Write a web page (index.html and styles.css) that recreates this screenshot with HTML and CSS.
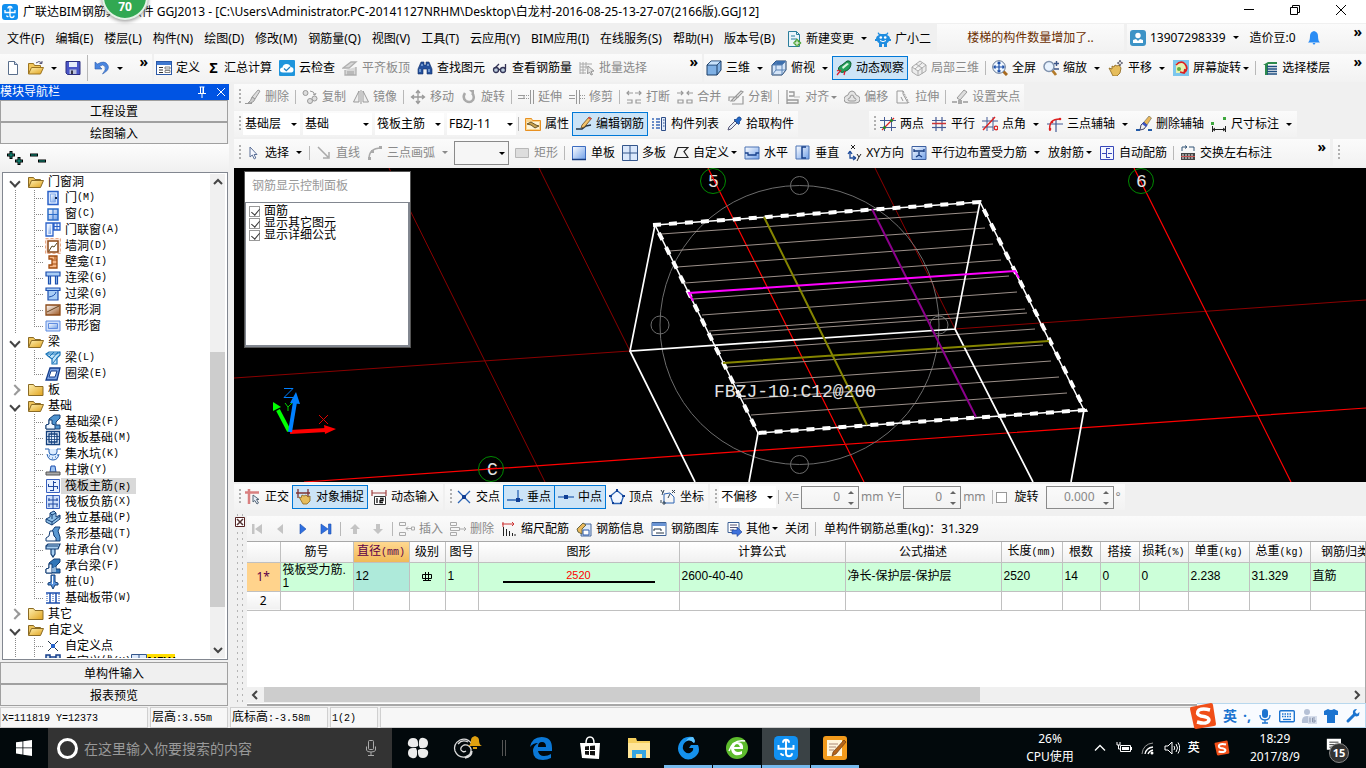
FILE: index.html
```html
<!DOCTYPE html>
<html lang="zh-CN">
<head>
<meta charset="utf-8">
<title>广联达BIM钢筋算量软件 GGJ2013</title>
<link rel="stylesheet" href="styles.css">
</head>
<body>
<svg class="sprite" aria-hidden="true">
<defs>
<linearGradient id="gy" x2="1" y2="1"><stop offset="0" stop-color="#fff0b0"/><stop offset="1" stop-color="#e0a21c"/></linearGradient>
<linearGradient id="gb" x2="1" y2="1"><stop offset="0" stop-color="#fff"/><stop offset="1" stop-color="#6f9fe8"/></linearGradient>
<linearGradient id="gr" x2="1" y2="1"><stop offset="0" stop-color="#fff"/><stop offset="1" stop-color="#9c5520"/></linearGradient>
</defs>
<symbol id="app" viewBox="0 0 16 16"><rect width="16" height="16" rx="3" fill="#1190f0"/><path d="M6 4.500q0-2 2-2t2 2M8 2.500v9q0 2 2 2t2-2M3 6v2.500h10V6M4.500 11.500q.5 1.500 2 1" fill="none" stroke="#fff" stroke-width="1.300"/></symbol>
<symbol id="newdoc" viewBox="0 0 16 16"><path d="M3.500 1.500h6l3 3v10h-9z" fill="#fff" stroke="#5a6f8c"/><path d="M9.500 1.500v3h3" fill="#cfdcf0" stroke="#5a6f8c"/></symbol>
<symbol id="openf" viewBox="0 0 16 16"><path d="M.5 14V3.500h5l1 2h6V8" fill="#f2c65a" stroke="#9c7420"/><path d="M.5 14l3-6.500h12l-3 6.500z" fill="url(#gy)" stroke="#9c7420"/><path d="M8 3q3-3 6 0m0-2v2.500h-2.500" fill="none" stroke="#557"/></symbol>
<symbol id="save" viewBox="0 0 16 16"><path d="M1 1.500h14v13H2.500L1 13z" fill="#4a56c8" stroke="#2c2f80"/><path d="M4 2h8v5H4z" fill="#e6ecfa"/><path d="M4.500 9.500h7V14h-7z" fill="#b9c0dc"/><path d="M6 10.500h2V14H6z" fill="#334"/></symbol>
<symbol id="undo" viewBox="0 0 16 16"><path d="M1 2v7h7L5.500 6.500Q9 3.500 11 6.500q1.500 3-2.500 7.500Q16 10 14 5.500 11-.500 3.500 4z" fill="#4a86e0" stroke="#2a5cae" stroke-width=".6"/></symbol>
<symbol id="define" viewBox="0 0 16 16"><rect x=".5" y="1.500" width="15" height="13" fill="#fff" stroke="#2b59a8"/><path d="M1 2h14v3H1z" fill="#3e78d0"/><path d="M3 7.500h4M3 10h4M3 12.500h4" stroke="#333"/><path d="M9 7h5v2H9zM9 10.500h5v2H9z" fill="none" stroke="#666" stroke-width=".8"/></symbol>
<symbol id="cloud" viewBox="0 0 16 16"><rect width="16" height="16" rx="1" fill="#1f95dc"/><path d="M4 12.500q-3 0-3-2.500t2.500-2.500Q4 4 7.500 4t4 3q3 0 3 2.800T12 12.500z" fill="#fff"/><path d="M5 8.500l2.300 2.200L11 7" fill="none" stroke="#1f7fc0" stroke-width="1.300"/></symbol>
<symbol id="flat" viewBox="0 0 16 16"><path d="M1 8l8-6 5 0-7 6zM3 10v5h11V7M5 12h7M5 14h7" fill="#d8d8d8" stroke="#b0b0b0" stroke-width="1.300"/></symbol>
<symbol id="bino" viewBox="0 0 16 16"><path d="M4 2h3v3h2V2h3l3 7v5h-5V9H6v5H1V9z" fill="#24509c" stroke="#102f68" stroke-width=".6"/><path d="M3 9v3m9-3v3M5 4v2m6-2v2" stroke="#9cc3f0" stroke-width="1.200"/></symbol>
<symbol id="glasses" viewBox="0 0 16 16"><circle cx="4" cy="10" r="2.500" fill="#bcd" stroke="#335" stroke-width="1.300"/><circle cx="11" cy="10" r="2.500" fill="#bcd" stroke="#335" stroke-width="1.300"/><path d="M6.500 9.500h2M3 8l4-4M13.500 9V4" stroke="#335" stroke-width="1.300"/></symbol>
<symbol id="batch" viewBox="0 0 16 16"><path d="M1 2v12M4 2v12M7 2v7M1 4h12M1 7h8M1 10h6M1 13h6" stroke="#aaa" fill="none"/><path d="M9 6l6 5-3 .5 1.500 3-1.500.5-1.500-3L8.500 14z" fill="#e2e2e2" stroke="#999"/></symbol>
<symbol id="cube" viewBox="0 0 16 16"><path d="M1 5l4-4h10v9l-4 5H1z" fill="#7fb0e4" stroke="#1b3c66"/><path d="M1 5h10v10M11 5l4-4" fill="none" stroke="#1b3c66"/><path d="M2 4.500L5 1.500h9l-3 3z" fill="#c9e2fa"/></symbol>
<symbol id="cubetop" viewBox="0 0 16 16"><path d="M1 5l4-4h10v9l-4 5H1z" fill="#d5e5f8" stroke="#1b3c66"/><path d="M1 5l4-4h10l-4 4z" fill="#3c6fae"/><path d="M1 5h10v10M11 5l4-4M1 15l4-5h10M5 10V2" fill="none" stroke="#5a83b5"/></symbol>
<symbol id="orbit" viewBox="0 0 16 16"><path d="M3 11Q1 7 6 5l5-4q3-1 4 2 0 6-5 8-4 3-7 0z" fill="#23a05a" stroke="#0b5c32"/><path d="M6 7l5-4 2 1-6 5z" fill="#d9f6e0"/><path d="M1 15l4-5M3 10l-2 1M8 15l1-4" stroke="#d23" fill="none" stroke-width="1.300"/></symbol>
<symbol id="local3d" viewBox="0 0 16 16"><path d="M1 7l8-6 6 4v6l-8 5-6-4zM1 7l6 4 8-6M7 11v5M5 4l6 4v6M4 9l7-6" fill="#ececec" stroke="#aaa"/></symbol>
<symbol id="full" viewBox="0 0 16 16"><path d="M11 11l4 4" stroke="#a86a20" stroke-width="3"/><circle cx="7" cy="7" r="6.300" fill="#eef6ff" stroke="#5f7390"/><path d="M7 2v10M2 7h10M5.500 3.500L7 2l1.500 1.500M5.500 10.500L7 12l1.500-1.500M3.500 5.500L2 7l1.500 1.500M10.500 5.500L12 7l-1.500 1.500" stroke="#1c4fa8" fill="none" stroke-width="1.200"/></symbol>
<symbol id="zoomi" viewBox="0 0 16 16"><path d="M9 10l4 5" stroke="#b37a28" stroke-width="2.800"/><circle cx="6" cy="6.500" r="5" fill="#e8f3ff" stroke="#8093ae" stroke-width="1.500"/><path d="M11 3.500h5M13.500 1v5M11 9h5" stroke="#3c5688" stroke-width="1.400"/></symbol>
<symbol id="pan" viewBox="0 0 16 16"><path d="M1 8l3 1V6l2 1 1-2 2 1 2-1 2 3-1 5-3 3H5z" fill="#e6bd5c" stroke="#8a651c" stroke-width=".8"/><path d="M12 0v6M9 3h6" stroke="#445" stroke-width="1.200"/><circle cx="12" cy="3" r="1.500" fill="#fff" stroke="#445" stroke-width=".7"/></symbol>
<symbol id="scrrot" viewBox="0 0 16 16"><rect width="16" height="16" fill="#7cc6ee"/><rect x="3" y="3" width="10" height="10" fill="#e6f2b0"/><path d="M3 5q5-5 9-1 4 5-1 9m1-4l-1 4-4-1" fill="none" stroke="#dc2020" stroke-width="1.700"/><circle cx="6" cy="9" r="2" fill="#62ad3f"/></symbol>
<symbol id="floors" viewBox="0 0 16 16"><path d="M1 5l5-3h9v2H6v11H3V5z" fill="#2d8a4d"/><path d="M5 6.500h10M5 9h10M5 11.500h10M5 14h10" stroke="#1c4d80" stroke-width="1.300"/></symbol>
<symbol id="brush" viewBox="0 0 16 16"><path d="M7 8l6-7 2 1-5 8z" fill="#ddd" stroke="#999"/><path d="M7 8l3 2q-1 4-7 4 3-2 4-6M0 14.500h7" fill="#ccc" stroke="#999"/></symbol>
<symbol id="copy" viewBox="0 0 16 16"><g fill="#ddd" stroke="#999"><circle cx="3.500" cy="4" r="2.500"/><circle cx="8" cy="12" r="2.500"/><circle cx="12.500" cy="9.500" r="2.500"/><path d="M8 2q4 0 5 4m-2-1l2 1 1-2" fill="none"/></g></symbol>
<symbol id="mirror" viewBox="0 0 16 16"><path d="M6 2v11H.500zM10 2v11h5.500zM8 1v14" fill="#eee" stroke="#999"/></symbol>
<symbol id="move" viewBox="0 0 16 16"><path d="M8 2v12M2 8h12M6 4l2-2.500L10 4M6 12l2 2.500 2-2.500M4 6L1.500 8 4 10M12 6l2.500 2-2.500 2" fill="none" stroke="#999" stroke-width="1.300"/></symbol>
<symbol id="rot" viewBox="0 0 16 16"><path d="M4 4q-3 5 1 8 4 2.500 7-1 2-4-1-7" fill="none" stroke="#aaa" stroke-width="2.500"/><path d="M8 1h5v5z" fill="#aaa"/></symbol>
<symbol id="extend" viewBox="0 0 16 16"><path d="M0 6.500h6v3H0" stroke="#999" fill="none"/><path d="M6 6.500h5M6 9.500h5" stroke="#999" stroke-dasharray="1 1"/><path d="M12.500 1v14M15.500 1v14" stroke="#999"/></symbol>
<symbol id="trim" viewBox="0 0 16 16"><path d="M0 6.500h6M0 9.500h6M7.500 1v14M10.500 1v14" stroke="#999"/><path d="M11 6.500h5M11 9.500h5" stroke="#999" stroke-dasharray="1 1"/></symbol>
<symbol id="breaki" viewBox="0 0 16 16"><path d="M1 11h5v3H1M15 11h-5v3h5M1 4h6M9 4h6M3 2L1 4l2 2M13 2l2 2-2 2" fill="none" stroke="#999" stroke-width="1.200"/></symbol>
<symbol id="merge" viewBox="0 0 16 16"><path d="M1 11h5v3H1zM10 11h5v3h-5zM0 4h6M10 4h6M4 2l2 2-2 2M12 2l-2 2 2 2" fill="none" stroke="#999" stroke-width="1.200"/></symbol>
<symbol id="split" viewBox="0 0 16 16"><path d="M1 12V8h10M4 15h11V7M3 12l10-10 2 1-9 9z" fill="none" stroke="#999" stroke-width="1.200"/></symbol>
<symbol id="align" viewBox="0 0 16 16"><path d="M2 1v14M4 3h5v4H4M2 11h11v3H2" fill="none" stroke="#999" stroke-width="1.300"/><path d="M9 8h6" stroke="#bbb"/></symbol>
<symbol id="offset" viewBox="0 0 16 16"><path d="M8 2q3 0 4 4 4 1 4 4 0 4-4 4H4q-4 0-4-4 0-3 4-4 1-4 4-4zM8 6q2 0 2 3 2 0 2 1.500T10 12H6q-2 0-2-1.500T6 9q0-3 2-3z" fill="#e4e4e4" stroke="#999"/></symbol>
<symbol id="stretch" viewBox="0 0 16 16"><path d="M2 2h6v3l5 9H2z" fill="none" stroke="#999"/><path d="M8 2l6 12" stroke="#999" stroke-dasharray="2 1"/><path d="M6 8l2 4" stroke="#999"/></symbol>
<symbol id="grippt" viewBox="0 0 16 16"><path d="M5 9l7-8 3 2-7 8z" fill="#ddd" stroke="#999"/><path d="M0 13h5M11 13h5" stroke="#999" stroke-width="1.500"/><path d="M6 11h4v4H6z" fill="#aaa"/></symbol>
<symbol id="prop" viewBox="0 0 16 16"><path d="M.5 2.500h6l1 2h8v10H.5z" fill="#fbd48c" stroke="#e89020"/><path d="M2 6h12v7H2z" fill="#fff4d8"/><path d="M2 8l4-2 5 3 3 1-4 2-4-3z" fill="#c8a24e" stroke="#4a3a14" stroke-width=".8"/></symbol>
<symbol id="editbar" viewBox="0 0 16 16"><path d="M0 13h6l4-3 5-1" fill="none" stroke="#234" stroke-width="1.400"/><path d="M6 9l7-8 2.500 1.500L8.500 11 5 12z" fill="#f3c36a" stroke="#6b4a1a" stroke-width=".8"/><path d="M13 1l2.500 1.500-1 1.200L12 2.200z" fill="#d44"/></symbol>
<symbol id="list" viewBox="0 0 16 16"><path d="M1 3h2M1 6h2M1 9h2M1 12h2M5 3h4M5 6h4M5 9h4M5 12h4" stroke="#3b69b8" stroke-width="1.300"/><path d="M10.500 1.500h4v13h-4z" fill="#e2ecfa" stroke="#2d4d88"/><path d="M12 4h1.500M12 7h1.500M12 10h1.500" stroke="#2d4d88"/></symbol>
<symbol id="pick" viewBox="0 0 16 16"><path d="M2 14l1-3 6-6 2 2-6 6z" fill="#e4eef8" stroke="#557"/><path d="M8 4l1-1 1 1q2-4 4-3 3 2-1 5l1 1-1.500 1.500z" fill="#2368c8" stroke="#123d80" stroke-width=".7"/></symbol>
<symbol id="ax2" viewBox="0 0 16 16"><path d="M4.500 1v14M11.500 1v14M0 4.500h16M0 11.500h16" stroke="#445a94"/><path d="M2 14L14 2" stroke="#d22" stroke-width="1.200"/><circle cx="4.500" cy="11.500" r="1.500" fill="#282"/><circle cx="11.500" cy="4.500" r="1.500" fill="#282"/></symbol>
<symbol id="axp" viewBox="0 0 16 16"><path d="M5 1v14M11 1v14M1 4.500h14" stroke="#445a94" stroke-width="1.200"/><path d="M1 7.500h14" stroke="#c33" stroke-width="1.500"/><path d="M1 11.500h14" stroke="#445a94" stroke-width="1.200"/></symbol>
<symbol id="axa" viewBox="0 0 16 16"><path d="M5 1v14M11 1v14M0 5h16M0 11h11" stroke="#445a94"/><path d="M1 14L13 1" stroke="#d22" stroke-width="1.400"/><circle cx="14" cy="12" r="1.800" fill="none" stroke="#d22" stroke-width="1.300"/></symbol>
<symbol id="ax3" viewBox="0 0 16 16"><path d="M0 8h16M9 3v13" stroke="#445a94" stroke-width="1.200"/><path d="M3 15Q1 3 13 3" fill="none" stroke="#d22" stroke-width="1.400"/><circle cx="3" cy="13" r="1.300" fill="#d22"/><circle cx="5" cy="6" r="1.300" fill="#d22"/><circle cx="13" cy="3" r="1.300" fill="#d22"/></symbol>
<symbol id="axdel" viewBox="0 0 16 16"><path d="M0 14h4M12 14h4" stroke="#235ba8" stroke-width="1.800"/><path d="M5 9l3-3 3 3-3 4-4 1z" fill="#eee" stroke="#446"/><path d="M8 6l5-6 2.500 2L11 9z" fill="#e9b75a" stroke="#665" stroke-width=".6"/><path d="M6 8l4 3 1.500-2-4-3z" fill="#3c52c0"/></symbol>
<symbol id="dim" viewBox="0 0 16 16"><path d="M1.500 10v6M14.500 10v6M2 13.500h12M4 12l-2 1.500 2 1.500M12 12l2 1.500-2 1.500" fill="none" stroke="#222"/><path d="M0 6h3v3H0zM12 1h3v3h-3z" fill="#3da63d"/></symbol>
<symbol id="cursor" viewBox="0 0 16 16"><path d="M5 2v10l2.300-2 2 4 1.500-1-1.700-3.500H12z" fill="#f6f8ff" stroke="#5b6f96"/></symbol>
<symbol id="linei" viewBox="0 0 16 16"><path d="M2 2l10 10M13 7v6H7" fill="none" stroke="#aaa" stroke-width="1.500"/></symbol>
<symbol id="arc" viewBox="0 0 16 16"><path d="M2 14Q2 3 14 3" fill="none" stroke="#aaa" stroke-width="1.500"/><path d="M1 12h3v3H1zM12 1h3v3h-3zM4 5h3v3H4z" fill="#aaa"/></symbol>
<symbol id="recti" viewBox="0 0 16 16"><path d="M1.500 3.500h13v9h-13z" fill="#ddd" stroke="#b8b8b8"/></symbol>
<symbol id="slab" viewBox="0 0 16 16"><path d="M1.500 1.500h13v13h-13z" fill="url(#gb)" stroke="#3c6cc0"/><path d="M1 14.500h14" stroke="#173c80" stroke-width="1.500"/></symbol>
<symbol id="slabs" viewBox="0 0 16 16"><path d="M.5.5h15v15H.5z" fill="#dbe8fb" stroke="#34568c"/><path d="M8 1v14M1 8h14" stroke="#34568c"/></symbol>
<symbol id="poly" viewBox="0 0 16 16"><path d="M5 2.500h10l-4 4 4 6H1.500z" fill="#f5f5f5" stroke="#222" stroke-width="1.200"/></symbol>
<symbol id="horiz" viewBox="0 0 16 16"><path d="M1 2h14v12H1z" fill="url(#gb)" stroke="#4a72b4"/><path d="M1 8h3v2h8V8h3" fill="none" stroke="#17408a" stroke-width="1.300"/></symbol>
<symbol id="vert" viewBox="0 0 16 16"><path d="M1 1h13v13H1z" fill="url(#gb)" stroke="#4a72b4"/><path d="M11 2H7v11h4" fill="none" stroke="#17408a" stroke-width="1.500"/></symbol>
<symbol id="xy" viewBox="0 0 16 16"><path d="M4 6v7h6M4 6L2 9M4 6l2 3M10 13l-3-2M10 13l-3 2" fill="none" stroke="#1d4b9a" stroke-width="1.300"/><path d="M5 0l4 4M9 0L5 4M11 9l2 3 2-3M13 12l-2 4" stroke="#222" fill="none"/></symbol>
<symbol id="para" viewBox="0 0 16 16"><path d="M1 1.500h14v13H1z" fill="url(#gb)" stroke="#3c5fa0"/><path d="M3 6h10M8 11V7M5 12l3-2 3 2M3 4v3M13 4v3" fill="none" stroke="#173c80" stroke-width="1.300"/></symbol>
<symbol id="auto" viewBox="0 0 16 16"><path d="M1.500 1.500h13v13h-13z" fill="#f4f7ff" stroke="#3948b8"/><path d="M7.500 3v10M3 8.500h4M7 3.500h4M7 12.500h4M9 8.500h4" stroke="#3948b8"/></symbol>
<symbol id="swap" viewBox="0 0 16 16"><path d="M2 6V2h5M5 .5L7 2 5 3.500M14 6V2H9" fill="none" stroke="#357"/><path d="M1 8h14v7H1z" fill="#444"/><path d="M3 9v5M6 9v5M9 9v5M12 9v5" stroke="#eee"/><path d="M1 11.500h14" stroke="#c55"/></symbol>
<symbol id="nd" viewBox="0 0 16 16"><path d="M2.500.5h8l3 3v12h-11z" fill="#eaf5fb" stroke="#2b7e9c"/><path d="M10.500.500v3h3M5 5h4M5 8h6" fill="none" stroke="#2b7e9c"/><path d="M11 7.500L15.500 12 11 16l-4-4z" fill="#43a02c"/><path d="M11 9.500v5M8.500 12h5" stroke="#fff"/></symbol>
<symbol id="robot" viewBox="0 0 16 16"><path d="M3 1q1 2 3 2h4q2 0 3-2 1 2-1 3 3 1 3 4h1v2h-2q-1 2-2 2v4h-3v-3H7v3H4v-4q-1 0-2-2H0V8h1q0-3 3-4-2-1-1-3z" fill="#1f8de0"/><circle cx="5.800" cy="6.500" r="1.300" fill="#fff"/><circle cx="10.200" cy="6.500" r="1.300" fill="#fff"/><path d="M5 9.500q3 2.500 6 0" fill="none" stroke="#fff"/></symbol>
<symbol id="user" viewBox="0 0 16 16"><rect width="16" height="16" rx="3" fill="#3d93c6"/><circle cx="8" cy="5.500" r="2.700" fill="#fff"/><path d="M3 13V10l3-1 2 2 2-2 3 1v3z" fill="#fff"/></symbol>
<symbol id="bell" viewBox="0 0 16 16"><path d="M2 12.500Q4 11 4 6q0-4 4-5 4 1 4 5 0 5 2 6.500z" fill="#2a8cf4"/><path d="M6.500 13h3L8 15z" fill="#2a8cf4"/></symbol>
<!-- snapping toolbar -->
<symbol id="ortho" viewBox="0 0 16 16"><path d="M0 3.500h14M4 0v15" stroke="#d98080" stroke-width="2.500"/><path d="M8 6v7l1.800-1.500L12 15l1.500-1-2-3.500H14z" fill="#e8eef8" stroke="#567"/></symbol>
<symbol id="snap" viewBox="0 0 16 16"><path d="M2 0v9M12 0v9M0 4h14" stroke="#7d3434" stroke-width="1.300"/><path d="M3 8l2 1 1-3 2 1 2-1 2 2 2-1v5l-3 3H7z" fill="#e6bd5c" stroke="#8a651c" stroke-width=".8"/></symbol>
<symbol id="dyn" viewBox="0 0 16 16"><path d="M1 1v6M15 1v6M1 4h14" stroke="#a04040" stroke-width="1.200"/><path d="M3.500 7.500h11v8h-11z" fill="#fff" stroke="#333"/><path d="M6 9v5M9 9.500h3v2H9v2h3" stroke="#111" fill="none" stroke-width="1.300"/></symbol>
<symbol id="cross" viewBox="0 0 16 16"><path d="M2 2l12 12M14 2L2 14" stroke="#2c64b4" stroke-width="1.300"/><path d="M6 6h4v4H6z" fill="#103f96"/></symbol>
<symbol id="perp" viewBox="0 0 16 16"><path d="M0 11h16M11 1v10" stroke="#2c64b4" stroke-width="1.300"/><path d="M9 9h4v4H9z" fill="#103f96"/></symbol>
<symbol id="mid" viewBox="0 0 16 16"><path d="M0 8h16" stroke="#2c64b4" stroke-width="1.300"/><path d="M6 6h4v4H6z" fill="#103f96"/></symbol>
<symbol id="vertex" viewBox="0 0 16 16"><path d="M8 1.500L14.500 7 12 14.500H4L1.500 7z" fill="#f2f7ff" stroke="#2c64b4" stroke-width="1.300"/><path d="M7 0h2v3H7zM13 6h3v2h-3zM0 6h3v2H0zM3 13h2v2H3zM11 13h2v2h-2z" fill="#103f96"/></symbol>
<symbol id="coord" viewBox="0 0 16 16"><path d="M4 5v9h10V8L10 4z" fill="none" stroke="#2c64b4"/><path d="M1 1l2 3M4 1L2 6M12 1l3 3M15 1l-3 3M3 13h2v2H3zM8 9l2-4M1 11v3" stroke="#345" fill="none"/></symbol>
<!-- record toolbar -->
<symbol id="first" viewBox="0 0 16 16"><path d="M3 3h2.500v10H3zM13 3v10L6 8z" fill="#c4c4c4"/></symbol>
<symbol id="prev" viewBox="0 0 16 16"><path d="M11 3v10L5 8z" fill="#c4c4c4"/></symbol>
<symbol id="next" viewBox="0 0 16 16"><path d="M5 3v10l6-5z" fill="#2f6fe0" stroke="#1b4fae" stroke-width=".6"/></symbol>
<symbol id="last" viewBox="0 0 16 16"><path d="M3 3v10l7-5zM10.500 3H13v10h-2.500z" fill="#2f6fe0" stroke="#1b4fae" stroke-width=".6"/></symbol>
<symbol id="up" viewBox="0 0 16 16"><path d="M8 3l5 5h-3v5H6V8H3z" fill="#c4c4c4"/></symbol>
<symbol id="down" viewBox="0 0 16 16"><path d="M8 13l5-5h-3V3H6v5H3z" fill="#c4c4c4"/></symbol>
<symbol id="ins" viewBox="0 0 16 16"><path d="M.5 1.500h6v3h-6zM.5 11.500h6v3h-6zM7 7.500h5M9 5.500l-2 2 2 2M12.500 6h3v3h-3z" fill="none" stroke="#aaa"/></symbol>
<symbol id="rdel" viewBox="0 0 16 16"><path d="M.5 1.500h6v3h-6zM.5 11.500h6v3h-6zM.5 6.500h9v3h-9zM10 8h6M14 6l2 2-2 2" fill="none" stroke="#aaa"/></symbol>
<symbol id="scalei" viewBox="0 0 16 16"><path d="M1 3h12M11 1l2 2-2 2M2 1v5" fill="none" stroke="#c33"/><path d="M2.500 6v9M5.500 8v7M8.500 10v5M11.500 12v3M14 13v2" stroke="#222"/></symbol>
<symbol id="info" viewBox="0 0 16 16"><path d="M6 3h9v12H5z" fill="#dce8f8" stroke="#44669c"/><path d="M1 8l6-6 3 2-4 4v5L2 11z" fill="#e9b75a" stroke="#664"/><path d="M7 9h6v5H7z" fill="#fff" stroke="#2b59a8"/></symbol>
<symbol id="lib" viewBox="0 0 16 16"><path d="M1 1.500h14v13H1z" fill="#fff" stroke="#3d6095"/><path d="M1 2h14v3H1z" fill="#6a94d4"/><path d="M3 10V8h7v2M5 12h8" fill="none" stroke="#234"/></symbol>
<symbol id="other" viewBox="0 0 16 16"><path d="M2 1.500h11v10H2z" fill="#fff" stroke="#3d6095"/><path d="M4 4h7M4 6.500h7M4 9h4" stroke="#557"/><path d="M6 9h5V6l5 5-5 4.500V13H6z" fill="#3f72dc" stroke="#1c3f90" stroke-width=".6"/></symbol>
<!-- tree -->
<symbol id="fopen" viewBox="0 0 16 16"><path d="M.5 13V3.500h5l1.500 2h5.500V8" fill="#eec45c" stroke="#8a6a24"/><path d="M.5 13.500l3-7h12l-3 7z" fill="url(#gy)" stroke="#8a6a24"/></symbol>
<symbol id="fshut" viewBox="0 0 16 16"><path d="M.5 13.500v-11h5l1.500 2h8v9z" fill="url(#gy)" stroke="#8a6a24"/></symbol>
<symbol id="t1" viewBox="0 0 16 16"><path d="M3 1.500h10v13H3z" fill="#d9e8ff" stroke="#2b62c8" stroke-width="1.500"/><path d="M5.500 4h5v8h-5z" fill="url(#gb)" stroke="#8ab0ec"/><path d="M10 7h2v2h-2z" fill="#124"/></symbol>
<symbol id="t2" viewBox="0 0 16 16"><path d="M3 3h10v11H3z" fill="url(#gb)" stroke="#2b6cc8" stroke-width="1.500"/><path d="M8 3v11M3 8.500h10" stroke="#2b6cc8"/></symbol>
<symbol id="t3" viewBox="0 0 16 16"><path d="M1 1h7v13H1zM9 1h6v7H9z" fill="#eaf2ff" stroke="#2b62c8" stroke-width="1.300"/><path d="M3 3h3v9H3z" fill="url(#gb)"/><path d="M12 1v7M9 4.500h6" stroke="#2b62c8"/></symbol>
<symbol id="t4" viewBox="0 0 16 16"><path d="M.5.5h15v15H.5z" fill="#fbe2d4" stroke="#e8a886" stroke-dasharray="3 2"/><path d="M3 3h10v11H3z" fill="#fff" stroke="#8c4a18" stroke-width="1.500"/><path d="M4 13l3-5 2 1 3-4" fill="none" stroke="#542"/></symbol>
<symbol id="t5" viewBox="0 0 16 16"><path d="M4 2h8v12H4v-3h3V5H4z" fill="#f7b888" stroke="#a04c10" stroke-width="1.300"/><path d="M7 6h5M7 10h5M10 2v3" stroke="#a04c10"/></symbol>
<symbol id="t6" viewBox="0 0 16 16"><path d="M1 2h14v4H1zM3.500 6h2v8h-2zM10.500 6h2v8h-2z" fill="#a8cdf6" stroke="#1c4fae" stroke-width="1.200"/></symbol>
<symbol id="t7" viewBox="0 0 16 16"><path d="M1 2h14v2.500H1zM3 4.500h10V14H3z" fill="#a8cdf6" stroke="#1c4fae" stroke-width="1.200"/><path d="M4 11q6-1 7-5" fill="none" stroke="#1c4fae"/></symbol>
<symbol id="t8" viewBox="0 0 16 16"><path d="M1 3h14v10H1z" fill="url(#gr)" stroke="#8c4a18" stroke-width="1.300"/><path d="M2 10L14 4" stroke="#642"/></symbol>
<symbol id="t9" viewBox="0 0 16 16"><path d="M1 3h14v10H1z" fill="#cfe0fb" stroke="#5f8ce0"/><path d="M3.500 5.500h9v5h-9z" fill="url(#gb)" stroke="#5f8ce0"/></symbol>
<symbol id="t10" viewBox="0 0 16 16"><path d="M1 4l3-2h11v3l-3 3v6H7V9L3 6z" fill="#bfe2f8" stroke="#1a74b8" stroke-width="1.200"/><path d="M4 7l5-5M7 9l6-7M8 13l4-5M1 4h11l3-2" stroke="#1a74b8" fill="none"/></symbol>
<symbol id="t11" viewBox="0 0 16 16"><path d="M5 2h10l-3 12H1z" fill="#7aa2e4" stroke="#163f8c" stroke-width="1.300"/><path d="M6 5h6l-2 6H4z" fill="#fff" stroke="#163f8c"/></symbol>
<symbol id="t12" viewBox="0 0 16 16"><path d="M1 15v-4l3-1V5l5-4h6v3l-4 4v3l4 0v4z" fill="#4f94d0" stroke="#143e74"/><path d="M1 15v-4l3-1V6h3v4l3 1v4z" fill="#eef6ff" stroke="#143e74"/></symbol>
<symbol id="t13" viewBox="0 0 16 16"><path d="M1.500 1.500h13v13h-13zM4 4h8v8H4z" fill="#e2eefc" stroke="#14407c" stroke-width="1.300"/><path d="M6.500 1v14M9.500 1v14M1 6.500h14M1 9.500h14" stroke="#14407c" stroke-width=".8"/></symbol>
<symbol id="t14" viewBox="0 0 16 16"><path d="M0 3h4v3q0 3 4 3t4-3V3h4M2 8q1 6 6 6t6-6" fill="#dcecff" stroke="#2560b0"/><path d="M4 10h1M7 12h1M10 11h1M12 9h1" stroke="#2560b0"/></symbol>
<symbol id="t15" viewBox="0 0 16 16"><path d="M6 4h4l1 6H5z" fill="#9fc4f2" stroke="#1c4fae"/><path d="M1 10h14v3H1z" fill="#aaa" stroke="#555"/></symbol>
<symbol id="t16" viewBox="0 0 16 16"><path d="M1.500 1.500h13v13h-13z" fill="#e6f0ff" stroke="#3a62c0"/><path d="M8.500 3v10M3 8.500h10M8 4.500h3M5 12.500h3M3.500 6v3M12.500 8v3" stroke="#1e48a0" fill="none"/></symbol>
<symbol id="t17" viewBox="0 0 16 16"><path d="M1.500 1.500h13v13h-13z" fill="#cfe0fb" stroke="#3a62c0"/><path d="M8 1v14M3 6h10M3 10h10M4 4v3M12 4v3M4 10v3M12 10v3" stroke="#1e48a0"/></symbol>
<symbol id="t18" viewBox="0 0 16 16"><path d="M1 9l4-2V3l4-2 2 2v4l4-2v4l-8 6-6-3z" fill="#8fc0e8" stroke="#143e74"/><path d="M1 9l6 3 8-6M7 12v3M5 3l2 2 4-2M7 5v4" fill="none" stroke="#143e74"/></symbol>
<symbol id="t19" viewBox="0 0 16 16"><path d="M7 5l3-4h5l-2 4 2 6v4h-4z" fill="#5b99d2" stroke="#143e74"/><path d="M1 15v-3l3-2 1-5h3l1 5 2 2v3z" fill="#f4f9ff" stroke="#143e74"/></symbol>
<symbol id="t20" viewBox="0 0 16 16"><path d="M1 4l2-2h12l-2 5H1zM6 7h4v5l-2 3-2-3z" fill="#a9d0f2" stroke="#143e74" stroke-width="1.200"/><path d="M1 4h12" stroke="#143e74"/></symbol>
<symbol id="t21" viewBox="0 0 16 16"><path d="M1 15v-4l3-1V5l5-4h6v3l-4 4v3l4 0v4z" fill="#3276b8" stroke="#143e74"/><path d="M1 15v-4l3-1V6h3v9z" fill="#eef6ff" stroke="#143e74"/><path d="M8 14v-4M10 14V9" stroke="#eef6ff"/></symbol>
<symbol id="t22" viewBox="0 0 16 16"><path d="M6 1h4v7l3 1v2h-3l-2 4-2-4H3V9l3-1z" fill="#5a94dc" stroke="#143e74"/><path d="M7.500 2v8" stroke="#fff"/></symbol>
<symbol id="t23" viewBox="0 0 16 16"><path d="M1 3h14M1 13h14M5 3v10M11 3v10" stroke="#1c4fae" stroke-width="1.500"/><path d="M8 4v8M2 4v8M14 4v8" stroke="#1c4fae" stroke-dasharray="1 1"/></symbol>
<symbol id="t24" viewBox="0 0 16 16"><path d="M3 3l10 10M13 3L3 13" stroke="#234"/><path d="M6 6h4v4H6z" fill="#2763c8"/></symbol>
<symbol id="t25" viewBox="0 0 16 16"><path d="M1 1h4v4H1zM11 1h4v4h-4zM5 3h6" fill="#cde" stroke="#163f8c" stroke-width="1.500"/></symbol>
<!-- taskbar -->
<symbol id="win" viewBox="0 0 16 16"><path d="M0 2.300L6.500 1.400v6.100H0zM7.300 1.300L16 0v7.500H7.300zM0 8.300h6.500v6.200L0 13.600zM7.300 8.300H16V16l-8.700-1.300z" fill="#fff"/></symbol>
<symbol id="mic" viewBox="0 0 16 16"><rect x="5.500" y=".5" width="5" height="9" rx="1" fill="none" stroke="#aaa"/><path d="M3.500 6.500v3.500q0 2 4.500 2t4.500-2V6.500M8 12v3M5 15.500h6" fill="none" stroke="#aaa"/></symbol>
<symbol id="clover" viewBox="0 0 24 24"><g fill="#ececec"><path d="M12 10Q9 12 5 11 1 10 2 6q1-4 5-4 5 0 5 5z"/><path d="M14 12q-2-3-1-7 1-4 5-3t4 5q0 5-5 5z"/><path d="M12 14q3-2 7-1 4 1 3 5-1 4-5 4-5 0-5-5z"/><path d="M10 12q2 3 1 7-1 4-5 3t-4-5q0-5 5-5z"/></g></symbol>
<symbol id="swirl" viewBox="0 0 30 24"><path d="M20 8Q15 1 8 4 1 8 3 15q3 7 10 6 7-2 6-8-2-5-7-4-4 2-3 5 2 3 5 1M20 15q0 6-7 7M6 8q4-5 10-2" fill="none" stroke="#ddd" stroke-width="1.300"/><path d="M16 10q3-1 3-6 0-3 4-4 4 1 4 4 0 5 3 6zM21 11h4v2h-4z" fill="#dfa010"/></symbol>
<symbol id="edge" viewBox="0 0 24 24"><path d="M1 11Q3 1 12.500 1 23 1 23 12v3H9q1 5 6 5 4 0 7-2v4q-4 2-8 2Q4 24 4 15q0-5 5-8-5 0-8 4zM9 11h8q0-5-4-5t-4 5z" fill="#0b78d7" fill-rule="evenodd"/></symbol>
<symbol id="store" viewBox="0 0 24 24"><path d="M2 7h20l-1 16-17-1z" fill="#fff"/><path d="M8 7q0-6 4-6t4 6" fill="none" stroke="#fff" stroke-width="1.500"/><path d="M7 10.500l4-.5v4H7zM12 10l5-.5V14h-5zM7 15h4v4l-4-.5zM12 15h5v4.500l-5-.5z" fill="#111"/></symbol>
<symbol id="expl" viewBox="0 0 24 24"><path d="M1 2h8l1 3h13v17H1z" fill="#f5cf5e"/><path d="M1 7h22v15H1z" fill="#ffe598"/><path d="M5 22v-8h14v8h-4v-4H9v4z" fill="#35a5e2"/></symbol>
<symbol id="gg" viewBox="0 0 24 24"><path d="M17 1q3 4 1 6-3-4-7-2-5 3-4 8 2 5 7 4 4-2 3-5h-4l2-3h7q3 7-3 12-7 5-13 0-6-6-3-13Q7-1 17 1z" fill="#1591ec"/><path d="M17 1q3 4 1 6-4-4-8-2 2-4 7-4z" fill="#5fc4ff"/></symbol>
<symbol id="ie" viewBox="0 0 24 24"><circle cx="12" cy="12" r="11" fill="#5dbb2d"/><path d="M4 15Q8 3 20 5" stroke="#fff" stroke-width="1.500" fill="none"/><path d="M6 12q0-6 6-6 7 0 6 7H9q1 3 4 3 2 0 4-1v3q-4 2-7 1-4-2-4-7zm3-1h6q-1-3-3-3t-3 3z" fill="#fff" fill-rule="evenodd"/></symbol>
<symbol id="note" viewBox="0 0 24 24"><rect width="24" height="24" rx="3" fill="#f29a1c"/><path d="M4 4h15v16H4z" fill="#fff6dc"/><path d="M6 8h9M6 11h7M6 14h5" stroke="#a87"/><path d="M21 4l2 2-10 12-4 2 1-4z" fill="#b5651a" stroke="#5a2c08" stroke-width=".6"/></symbol>
<symbol id="chev" viewBox="0 0 16 16"><path d="M3 10.500l5-5 5 5" fill="none" stroke="#fff" stroke-width="1.300"/></symbol>
<symbol id="batt" viewBox="0 0 16 16"><path d="M4.500 5.500h10v6h-10zM15.500 7v3" fill="none" stroke="#fff"/><path d="M6 7h7v3H6z" fill="#fff"/><path d="M1 2v3h3V2M2.500 5v4h2" fill="none" stroke="#fff"/></symbol>
<symbol id="wifi" viewBox="0 0 16 16"><g fill="none"><path d="M2 14Q3 4 13 3" stroke="#999"/><path d="M5 14q1-6 8-7M8 14q1-3 5-4" stroke="#fff" stroke-width="1.300"/></g><circle cx="12" cy="13" r="1.500" fill="#fff"/></symbol>
<symbol id="vol" viewBox="0 0 16 16"><path d="M1 6h3l4-4v12l-4-4H1z" fill="none" stroke="#fff"/><path d="M10 6q1.500 2 0 4M12 4q3 4 0 8M14 2.500q3.500 5.500 0 11" fill="none" stroke="#fff"/></symbol>
<symbol id="sogou" viewBox="0 0 28 28"><path d="M2 5L22 1q2 0 2 2l3 19q0 2-2 2L7 27q-2 0-2-2L1 7q0-2 1-2z" fill="#f04e18"/><path d="M21 8q-7-2-11 0-4 4 2 6 8 1 8 4-1 5-12 2" fill="none" stroke="#fff" stroke-width="3.500"/></symbol>
<symbol id="actn" viewBox="0 0 24 24"><path d="M1 1h17v13H9l-4 4v-4H1z" fill="#fff"/><path d="M4 5h11M4 8h11M4 11h8" stroke="#111"/></symbol>
<symbol id="smic" viewBox="0 0 16 16"><rect x="5" y="1" width="6" height="9" rx="3" fill="#1c74d0"/><path d="M3 7q0 5 5 5t5-5M8 12v3M5 15h6" fill="none" stroke="#1c74d0" stroke-width="1.300"/></symbol>
<symbol id="kbd" viewBox="0 0 16 16"><rect x=".7" y="2.700" width="14.600" height="11" rx="1" fill="none" stroke="#1c74d0" stroke-width="1.400"/><path d="M3 6h10M3 8.500h10" stroke="#1c74d0" stroke-dasharray="1.500 1" stroke-width="1.500"/><path d="M4 11.500h8" stroke="#1c74d0" stroke-width="1.300"/></symbol>
<symbol id="person" viewBox="0 0 16 16"><circle cx="6" cy="4" r="3" fill="#b5c1d6"/><path d="M1 15q-1-7 5-7t6 7z" fill="#b5c1d6"/><path d="M7 8h9v8H7z" fill="#d6deec"/><path d="M9 9.500v5M14 10h-2.500v4H14v-2h-2" stroke="#8894ac" fill="none"/></symbol>
<symbol id="shirt" viewBox="0 0 16 16"><path d="M1 3l4-2q3 2 6 0l4 2v4h-3v8H4V7H1z" fill="#1c74d0"/></symbol>
<symbol id="wrench" viewBox="0 0 16 16"><path d="M3 13l6-6" stroke="#1c74d0" stroke-width="3" stroke-linecap="round"/><path d="M14.500 4L12 6 10 4l2-3Q7 1 8 6q2 4 6 1.500z" fill="#1c74d0"/></symbol>
</svg>

<header class="titlebar">
  <svg class="i"><use href="#app"/></svg>
  <h1>广联达BIM钢筋算量软件 GGJ2013 - [C:\Users\Administrator.PC-20141127NRHM\Desktop\白龙村-2016-08-25-13-27-07(2166版).GGJ12]</h1>
  <span class="speed">70</span>
  <div class="winctl">
    <button aria-label="最小化"><svg class="i"><path d="M3 7.500h10" stroke="#000"/></svg></button>
    <button aria-label="还原"><svg class="i"><path d="M3.500 5.500h7v7h-7zM5.500 5V3.500h7v7H11" fill="none" stroke="#000"/></svg></button>
    <button aria-label="关闭"><svg class="i"><path d="M3 3l10 10M13 3L3 13" stroke="#000"/></svg></button>
  </div>
</header>

<nav class="menubar">
  <div class="menus">
    <button>文件(F)</button><button>编辑(E)</button><button>楼层(L)</button><button>构件(N)</button><button>绘图(D)</button><button>修改(M)</button><button>钢筋量(Q)</button><button>视图(V)</button><button>工具(T)</button><button>云应用(Y)</button><button>BIM应用(I)</button><button>在线服务(S)</button><button>帮助(H)</button><button>版本号(B)</button>
    <button class="b"><svg class="i"><use href="#nd"/></svg>新建变更<i class="caret"></i></button>
    <button class="b"><svg class="i"><use href="#robot"/></svg>广小二</button>
  </div>
  <div class="strip notice"><a href="#">楼梯的构件数量增加了..</a></div>
  <div class="strip account">
    <button class="b"><svg class="i"><use href="#user"/></svg>13907298339<i class="caret"></i></button>
    <button class="b">造价豆:0</button>
    <button class="b" aria-label="消息"><svg class="i"><use href="#bell"/></svg></button>
    <span class="more">»</span>
  </div>
</nav>

<div class="mainbar">
  <div class="strip quick">
    <button class="b" aria-label="新建"><svg class="i"><use href="#newdoc"/></svg></button>
    <button class="b" aria-label="打开"><svg class="i"><use href="#openf"/></svg><i class="caret"></i></button>
    <button class="b" aria-label="保存"><svg class="i"><use href="#save"/></svg></button>
    <i class="sep tall"></i>
    <button class="b" aria-label="撤销"><svg class="i"><use href="#undo"/></svg><i class="caret"></i></button>
    <span class="more">»</span>
  </div>
  <div class="strip">
    <button class="b"><svg class="i"><use href="#define"/></svg>定义</button>
    <button class="b"><b class="sigma">Σ</b>汇总计算</button>
    <button class="b"><svg class="i"><use href="#cloud"/></svg>云检查</button>
    <button class="b" disabled><svg class="i"><use href="#flat"/></svg>平齐板顶</button>
    <button class="b"><svg class="i"><use href="#bino"/></svg>查找图元</button>
    <button class="b"><svg class="i"><use href="#glasses"/></svg>查看钢筋量</button>
    <button class="b" disabled><svg class="i"><use href="#batch"/></svg>批量选择</button>
    <span class="more">»</span>
  </div>
  <div class="strip">
    <button class="b"><svg class="i"><use href="#cube"/></svg>三维<i class="caret"></i></button>
    <button class="b"><svg class="i"><use href="#cubetop"/></svg>俯视<i class="caret"></i></button>
    <button class="b on"><svg class="i"><use href="#orbit"/></svg>动态观察</button>
    <button class="b" disabled><svg class="i"><use href="#local3d"/></svg>局部三维</button>
    <i class="sep"></i>
    <button class="b"><svg class="i"><use href="#full"/></svg>全屏</button>
    <button class="b"><svg class="i"><use href="#zoomi"/></svg>缩放<i class="caret"></i></button>
    <button class="b"><svg class="i"><use href="#pan"/></svg>平移<i class="caret"></i></button>
    <button class="b"><svg class="i"><use href="#scrrot"/></svg>屏幕旋转<i class="caret near"></i></button>
    <i class="sep"></i>
    <button class="b"><svg class="i"><use href="#floors"/></svg>选择楼层</button>
    <span class="more">»</span>
  </div>
</div>

<main class="work">
  <aside class="side">
    <h2>模块导航栏<span><svg class="i"><path d="M5.500 3h5M6.500 3v6M9.500 3v6M4 9.500h8M8 10v4" fill="none" stroke="#fff"/><path d="M9 3v6" stroke="#fff"/></svg><svg class="i"><path d="M4 4l8 8M12 4l-8 8" stroke="#fff"/></svg></span></h2>
    <button class="page">工程设置</button>
    <button class="page">绘图输入</button>
    <div class="expand">
      <button aria-label="全部展开"><svg class="i"><path d="M4 1v8M0 5h8M12 7v8M8 11h8" stroke="#000" stroke-width="3"/><path d="M4 2v6M1 5h6M12 8v6M9 11h6" stroke="#16a08c" stroke-width="1"/></svg></button>
      <button aria-label="全部折叠"><svg class="i"><path d="M0 5h8M8 11h8" stroke="#000" stroke-width="3"/><path d="M1 5h6M9 11h6" stroke="#16a08c" stroke-width="1"/></svg></button>
    </div>
    <div class="treebox">
      <ul class="tree">
        <li class="g open"><svg class="i"><use href="#fopen"/></svg>门窗洞</li>
        <li><svg class="i"><use href="#t1"/></svg>门<kbd>(M)</kbd></li>
        <li><svg class="i"><use href="#t2"/></svg>窗<kbd>(C)</kbd></li>
        <li><svg class="i"><use href="#t3"/></svg>门联窗<kbd>(A)</kbd></li>
        <li><svg class="i"><use href="#t4"/></svg>墙洞<kbd>(D)</kbd></li>
        <li><svg class="i"><use href="#t5"/></svg>壁龛<kbd>(I)</kbd></li>
        <li><svg class="i"><use href="#t6"/></svg>连梁<kbd>(G)</kbd></li>
        <li><svg class="i"><use href="#t7"/></svg>过梁<kbd>(G)</kbd></li>
        <li><svg class="i"><use href="#t8"/></svg>带形洞</li>
        <li class="end"><svg class="i"><use href="#t9"/></svg>带形窗</li>
        <li class="g open"><svg class="i"><use href="#fopen"/></svg>梁</li>
        <li><svg class="i"><use href="#t10"/></svg>梁<kbd>(L)</kbd></li>
        <li class="end"><svg class="i"><use href="#t11"/></svg>圈梁<kbd>(E)</kbd></li>
        <li class="g"><svg class="i"><use href="#fshut"/></svg>板</li>
        <li class="g open"><svg class="i"><use href="#fopen"/></svg>基础</li>
        <li><svg class="i"><use href="#t12"/></svg>基础梁<kbd>(F)</kbd></li>
        <li><svg class="i"><use href="#t13"/></svg>筏板基础<kbd>(M)</kbd></li>
        <li><svg class="i"><use href="#t14"/></svg>集水坑<kbd>(K)</kbd></li>
        <li><svg class="i"><use href="#t15"/></svg>柱墩<kbd>(Y)</kbd></li>
        <li><svg class="i"><use href="#t16"/></svg><span class="sel">筏板主筋<kbd>(R)</kbd></span></li>
        <li><svg class="i"><use href="#t17"/></svg>筏板负筋<kbd>(X)</kbd></li>
        <li><svg class="i"><use href="#t18"/></svg>独立基础<kbd>(P)</kbd></li>
        <li><svg class="i"><use href="#t19"/></svg>条形基础<kbd>(T)</kbd></li>
        <li><svg class="i"><use href="#t20"/></svg>桩承台<kbd>(V)</kbd></li>
        <li><svg class="i"><use href="#t21"/></svg>承台梁<kbd>(F)</kbd></li>
        <li><svg class="i"><use href="#t22"/></svg>桩<kbd>(U)</kbd></li>
        <li class="end"><svg class="i"><use href="#t23"/></svg>基础板带<kbd>(W)</kbd></li>
        <li class="g"><svg class="i"><use href="#fshut"/></svg>其它</li>
        <li class="g open"><svg class="i"><use href="#fopen"/></svg>自定义</li>
        <li><svg class="i"><use href="#t24"/></svg>自定义点</li>
        <li><svg class="i"><use href="#t25"/></svg>自定义线<kbd>(X)</kbd><svg class="i"><use href="#slabs"/></svg><b class="new">NEW</b></li>
      </ul>
      <div class="vscroll">
        <svg class="i"><path d="M4 10l4-4 4 4" fill="none" stroke="#444" stroke-width="2"/></svg>
        <div class="track"><div class="thumb"></div></div>
        <svg class="i"><path d="M4 6l4 4 4-4" fill="none" stroke="#444" stroke-width="2"/></svg>
      </div>
    </div>
    <button class="page">单构件输入</button>
    <button class="page">报表预览</button>
  </aside>

  <section class="content">
    <div class="row r1">
      <div class="strip">
        <i class="grip"></i>
        <button class="b" disabled><svg class="i"><use href="#brush"/></svg>删除</button><i class="sep"></i>
        <button class="b" disabled><svg class="i"><use href="#copy"/></svg>复制</button>
        <button class="b" disabled><svg class="i"><use href="#mirror"/></svg>镜像</button><i class="sep"></i>
        <button class="b" disabled><svg class="i"><use href="#move"/></svg>移动</button>
        <button class="b" disabled><svg class="i"><use href="#rot"/></svg>旋转</button><i class="sep"></i>
        <button class="b" disabled><svg class="i"><use href="#extend"/></svg>延伸</button>
        <button class="b" disabled><svg class="i"><use href="#trim"/></svg>修剪</button><i class="sep"></i>
        <button class="b" disabled><svg class="i"><use href="#breaki"/></svg>打断</button>
        <button class="b" disabled><svg class="i"><use href="#merge"/></svg>合并</button>
        <button class="b" disabled><svg class="i"><use href="#split"/></svg>分割</button><i class="sep"></i>
        <button class="b" disabled><svg class="i"><use href="#align"/></svg>对齐<i class="caret near"></i></button>
        <button class="b" disabled><svg class="i"><use href="#offset"/></svg>偏移</button>
        <button class="b" disabled><svg class="i"><use href="#stretch"/></svg>拉伸</button><i class="sep"></i>
        <button class="b" disabled><svg class="i"><use href="#grippt"/></svg>设置夹点</button>
      </div>
    </div>
    <div class="row r2">
      <div class="strip">
        <i class="grip"></i>
        <label class="combo short"><select aria-label="楼层"><option>基础层</option></select></label>
        <label class="combo"><select aria-label="构件类别"><option>基础</option></select></label>
        <label class="combo"><select aria-label="构件类型"><option>筏板主筋</option></select></label>
        <label class="combo"><select aria-label="构件"><option>FBZJ-11</option></select></label>
        <i class="sep"></i>
        <button class="b"><svg class="i"><use href="#prop"/></svg>属性</button>
        <button class="b on"><svg class="i"><use href="#editbar"/></svg>编辑钢筋</button>
        <button class="b"><svg class="i"><use href="#list"/></svg>构件列表</button>
        <button class="b"><svg class="i"><use href="#pick"/></svg>拾取构件</button>
      </div>
      <div class="strip aux">
        <i class="grip"></i>
        <button class="b"><svg class="i"><use href="#ax2"/></svg>两点</button>
        <button class="b"><svg class="i"><use href="#axp"/></svg>平行</button>
        <button class="b"><svg class="i"><use href="#axa"/></svg>点角<i class="caret"></i></button>
        <button class="b"><svg class="i"><use href="#ax3"/></svg>三点辅轴<i class="caret"></i></button>
        <button class="b"><svg class="i"><use href="#axdel"/></svg>删除辅轴</button>
        <button class="b"><svg class="i"><use href="#dim"/></svg>尺寸标注<i class="caret"></i></button>
      </div>
    </div>
    <div class="row r3">
      <div class="strip grow">
        <i class="grip"></i>
        <button class="b"><svg class="i"><use href="#cursor"/></svg>选择<i class="caret"></i></button><i class="sep"></i>
        <button class="b" disabled><svg class="i"><use href="#linei"/></svg>直线</button>
        <button class="b" disabled><svg class="i"><use href="#arc"/></svg>三点画弧<i class="caret"></i></button>
        <label class="combo boxed"><select aria-label="画弧方式" disabled><option></option></select></label>
        <button class="b" disabled><svg class="i"><use href="#recti"/></svg>矩形</button><i class="sep"></i>
        <button class="b"><svg class="i"><use href="#slab"/></svg>单板</button>
        <button class="b"><svg class="i"><use href="#slabs"/></svg>多板</button>
        <button class="b"><svg class="i"><use href="#poly"/></svg>自定义<i class="caret near"></i></button>
        <button class="b"><svg class="i"><use href="#horiz"/></svg>水平</button>
        <button class="b"><svg class="i"><use href="#vert"/></svg>垂直</button>
        <button class="b"><svg class="i"><use href="#xy"/></svg>XY方向</button>
        <button class="b"><svg class="i"><use href="#para"/></svg>平行边布置受力筋<i class="caret"></i></button>
        <button class="b">放射筋<i class="caret near"></i></button>
        <button class="b"><svg class="i"><use href="#auto"/></svg>自动配筋</button><i class="sep"></i>
        <button class="b"><svg class="i"><use href="#swap"/></svg>交换左右标注</button>
        <span class="more">»</span>
      </div>
      <div class="strip stub"><i class="grip"></i></div>
    </div>

    <div class="view">
      <svg class="scene" viewBox="234 168 1132 314" preserveAspectRatio="xMinYMin slice" fill="none">
        <g stroke="#8a0000"><path d="M389 168L545 482M539 168L630 351M234 378L630 351M875 168L955 329L1366 300"/></g>
        <g stroke="#f00" stroke-width="1.200"><path d="M708 168L864 482M1134 168L1291 482M304 482L1366 408"/></g>
        <g stroke="#6c6c6c"><circle cx="799.500" cy="325" r="139.500"/><circle cx="799.500" cy="185.500" r="9"/><circle cx="799.500" cy="464.500" r="9"/><circle cx="660" cy="325" r="9"/><circle cx="939" cy="325" r="9"/></g>
        <path stroke="#9c908a" d="M661 234L977 212M669 251L985 228M677 267L993 244M685 283L1001 260M693 299L1009 276M702 315L1017 292M709 331L1025 309M712 335L1027 313M718 351L1035 329M727 367L1043 345M735 383L1051 361M743 399L1059 377M751 415L1067 393"/>
        <path stroke="#fff" stroke-width="1.700" d="M655 225L630 351L955 329L980 202M630 351L695 482M955 329L1033 482M1084 410L1071 482M758 433L749 482"/>
        <path stroke="#fff" stroke-width="1.500" d="M655 225L980 202L1084 410L758 433z"/>
        <path stroke="#fff" stroke-width="4" stroke-dasharray="8 8" d="M653 225L980 202L1085 410L758 433L655 225"/>
        <g stroke-width="2"><path stroke="#858500" d="M764 217L867 425M723 363L1049 341"/><path stroke="#8c008c" d="M872 209L976 417"/><path stroke="#f0f" d="M693 301L689 293L1015 271L1019 278"/></g>
        <g stroke="#008a00"><circle cx="713" cy="181" r="12.500"/><circle cx="1141" cy="181" r="12.500"/><circle cx="491" cy="469" r="12.500"/></g>
        <g class="cad" fill="#e2e2e2"><text x="708" y="187">5</text><text x="1136" y="187">6</text><text x="487" y="475">C</text><text x="714" y="397">FBZJ-10:C12@200</text></g>
        <path stroke="#f00" d="M711 174L716 184M486 469L497 468"/>
        <path stroke="#f00" stroke-width="4" d="M290 432L326 430"/><path fill="#f00" d="M324 425L336 429L325 434z"/>
        <path stroke="#0f0" stroke-width="4" d="M289 431L278 410"/><path fill="#0f0" d="M273 402L281 407L273 411z"/>
        <path stroke="#0080ff" stroke-width="4" d="M290 432L295 402"/><path fill="#0080ff" d="M296 392L300 404L290 403z"/>
        <path stroke="#0080ff" d="M284 388.500H293L284 397.500H293"/><path stroke="#0c0" d="M285 403L288 407L292 403M288 407V411"/><path stroke="#d00" d="M319 415L328 424M328 415L319 424"/>
      </svg>
      <form class="floatbox">
        <h3>钢筋显示控制面板</h3>
        <div class="opts">
          <label><input type="checkbox" checked>面筋</label>
          <label><input type="checkbox" checked>显示其它图元</label>
          <label><input type="checkbox" checked>显示详细公式</label>
        </div>
      </form>
    </div>

    <div class="row r4">
      <div class="strip">
        <i class="grip"></i>
        <button class="b"><svg class="i"><use href="#ortho"/></svg>正交</button>
        <button class="b on"><svg class="i"><use href="#snap"/></svg>对象捕捉</button>
        <button class="b"><svg class="i"><use href="#dyn"/></svg>动态输入</button>
      </div>
      <div class="strip">
        <i class="grip"></i>
        <button class="b"><svg class="i"><use href="#cross"/></svg>交点</button>
        <button class="b on"><svg class="i"><use href="#perp"/></svg>垂点</button>
        <button class="b on"><svg class="i"><use href="#mid"/></svg>中点</button>
        <button class="b"><svg class="i"><use href="#vertex"/></svg>顶点</button>
        <button class="b"><svg class="i"><use href="#coord"/></svg>坐标</button>
      </div>
      <div class="strip">
        <i class="grip"></i>
        <label class="combo short"><select aria-label="偏移方式"><option>不偏移</option></select></label>
        <i class="sep"></i>
        <label class="num">X=<span class="spin"><input value="0" disabled></span>mm</label>
        <label class="num">Y=<span class="spin"><input value="0" disabled></span>mm</label>
        <i class="sep"></i>
        <label class="check"><input type="checkbox">旋转</label>
        <label class="num"><span class="spin wide"><input value="0.000" aria-label="旋转角度" disabled></span>°</label>
      </div>
    </div>

    <div class="dock">
      <div class="gutter"><svg class="i"><path d="M1.500 1.500h9v9h-9z" fill="#fff" stroke="#522"/><path d="M3 3l6 6M9 3L3 9" stroke="#533" stroke-width="1.500"/></svg></div>
      <div class="sheet">
        <div class="strip rec">
          <button class="b" disabled aria-label="首条"><svg class="i"><use href="#first"/></svg></button>
          <button class="b" disabled aria-label="上一条"><svg class="i"><use href="#prev"/></svg></button>
          <button class="b" aria-label="下一条"><svg class="i"><use href="#next"/></svg></button>
          <button class="b" aria-label="末条"><svg class="i"><use href="#last"/></svg></button>
          <i class="sep"></i>
          <button class="b" disabled aria-label="上移"><svg class="i"><use href="#up"/></svg></button>
          <button class="b" disabled aria-label="下移"><svg class="i"><use href="#down"/></svg></button>
          <i class="sep"></i>
          <button class="b" disabled><svg class="i"><use href="#ins"/></svg>插入</button>
          <button class="b" disabled><svg class="i"><use href="#rdel"/></svg>删除</button>
          <button class="b"><svg class="i"><use href="#scalei"/></svg>缩尺配筋</button>
          <button class="b"><svg class="i"><use href="#info"/></svg>钢筋信息</button>
          <button class="b"><svg class="i"><use href="#lib"/></svg>钢筋图库</button>
          <button class="b"><svg class="i"><use href="#other"/></svg>其他<i class="caret near"></i></button>
          <button class="b">关闭</button>
          <i class="sep"></i>
          <span>单构件钢筋总重(kg)：31.329</span>
        </div>
        <div class="gridbox">
          <table>
            <colgroup><col class="w33"><col class="w73"><col class="w56"><col class="w36"><col class="w33"><col class="w201"><col class="w166"><col class="w156"><col class="w61"><col class="w38"><col class="w39"><col class="w49"><col class="w61"><col class="w61"><col class="w70"></colgroup>
            <thead><tr><th></th><th>筋号</th><th class="cur">直径<kbd>(mm)</kbd></th><th>级别</th><th>图号</th><th>图形</th><th>计算公式</th><th>公式描述</th><th>长度<kbd>(mm)</kbd></th><th>根数</th><th>搭接</th><th>损耗<kbd>(%)</kbd></th><th>单重<kbd>(kg)</kbd></th><th>总重<kbd>(kg)</kbd></th><th>钢筋归类</th></tr></thead>
            <tbody>
              <tr class="hot"><th>1*</th><td>筏板受力筋.<br>1</td><td class="cell">12</td><td class="mid"><svg class="grade"><path d="M1.500 3.500h9v4h-9zM4.500 1v9M7.500 1v9M2 9.500h8" fill="none" stroke="#000"/></svg></td><td>1</td><td class="fig"><span>2520</span></td><td>2600-40-40</td><td>净长-保护层-保护层</td><td>2520</td><td>14</td><td>0</td><td>0</td><td>2.238</td><td>31.329</td><td>直筋</td></tr>
              <tr><th>2</th><td></td><td></td><td></td><td></td><td></td><td></td><td></td><td></td><td></td><td></td><td></td><td></td><td></td><td></td></tr>
            </tbody>
          </table>
          <div class="hscroll">
            <svg class="i"><path d="M10 4L6 8l4 4" fill="none" stroke="#444" stroke-width="2"/></svg>
            <div class="track"><div class="thumb"></div></div>
            <svg class="i"><path d="M6 4l4 4-4 4" fill="none" stroke="#444" stroke-width="2"/></svg>
          </div>
        </div>
      </div>
    </div>
  </section>
</main>

<footer class="status">
  <span class="s1"><kbd>X=111819 Y=12373</kbd></span><span class="s2">层高<kbd>:3.55m</kbd></span><span class="s3">底标高<kbd>:-3.58m</kbd></span><span class="s4"><kbd>1(2)</kbd></span><span class="s5"></span>
  <div class="ime">
    <svg class="logo"><use href="#sogou"/></svg>
    <b>英</b><b>·,</b>
    <svg class="i"><use href="#smic"/></svg><svg class="i"><use href="#kbd"/></svg><svg class="i"><use href="#person"/></svg><svg class="i"><use href="#shirt"/></svg><svg class="i"><use href="#wrench"/></svg>
  </div>
</footer>

<div class="taskbar">
  <button class="start" aria-label="开始"><svg class="i"><use href="#win"/></svg></button>
  <label class="search"><span class="ring"></span><input placeholder="在这里输入你要搜索的内容" aria-label="搜索"><svg class="i"><use href="#mic"/></svg></label>
  <div class="apps">
    <button aria-label="四叶草"><svg class="a"><use href="#clover"/></svg></button>
    <button aria-label="提醒"><svg class="a w"><use href="#swirl"/></svg></button>
    <i class="bars"></i>
    <button aria-label="Edge"><svg class="a"><use href="#edge"/></svg></button>
    <button aria-label="应用商店"><svg class="a"><use href="#store"/></svg></button>
    <button aria-label="文件资源管理器"><svg class="a"><use href="#expl"/></svg></button>
    <button class="run" aria-label="广联达"><svg class="a"><use href="#gg"/></svg></button>
    <button class="run" aria-label="浏览器"><svg class="a"><use href="#ie"/></svg></button>
    <button class="run act" aria-label="钢筋算量"><svg class="a"><use href="#app"/></svg></button>
    <button class="run" aria-label="写字板"><svg class="a"><use href="#note"/></svg></button>
  </div>
  <div class="tray">
    <div class="two cpu">26%<br>CPU使用</div>
    <svg class="i"><use href="#chev"/></svg><svg class="i"><use href="#batt"/></svg><svg class="i"><use href="#wifi"/></svg><svg class="i"><use href="#vol"/></svg><b>英</b><svg class="i sg"><use href="#sogou"/></svg>
    <div class="two clock">18:29<br>2017/8/9</div>
    <div class="bell"><svg class="n"><use href="#actn"/></svg><b>15</b></div>
  </div>
</div>
</body>
</html>
```
FILE: styles.css
```css
* { box-sizing: border-box; }
body {
  margin: 0; height: 100vh; display: flex; flex-direction: column; overflow: hidden;
  background: #f0f0f0; color: #000;
  font: 12px/16px "Noto Sans", "Noto Sans CJK SC", sans-serif;
}
.sprite { position: absolute; width: 0; height: 0; }
button { font: inherit; color: inherit; background: none; border: 0; padding: 0; white-space: nowrap; }
svg { display: block; flex: none; }
.i { width: 16px; height: 16px; }
kbd { font: 10px/12px "Liberation Mono", monospace; }

.titlebar { position: relative; height: 23px; flex: none; display: flex; align-items: center; background: #fff; padding: 0 0 0 2px; gap: 5px; }
.titlebar h1 { margin: 0; font-size: 12px; font-weight: 400; flex: 1; white-space: nowrap; }
.speed { position: absolute; left: 102px; top: -26px; width: 46px; height: 46px; border-radius: 50%; background: #31a852; border: 2px solid #e4f2e6; box-shadow: 0 1px 4px #888; color: #fff; text-align: center; padding-top: 23px; font-weight: 700; z-index: 2; }
.winctl { display: flex; gap: 30px; padding-right: 17px; align-self: flex-start; padding-top: 2px; }

.menubar { display: flex; height: 30px; flex: none; align-items: stretch; gap: 3px; padding-top: 1px; }
.menus { display: flex; align-items: center; gap: 11px; width: 934px; padding-left: 7px; }
.menus .b:last-child { margin-left: -4px; }
.strip { display: flex; align-items: center; gap: 7px; background: linear-gradient(#fbfbfb, #f2f2f2); white-space: nowrap; }
.notice { width: 187px; justify-content: center; margin-bottom: 2px; }
.notice a { color: #6b2e00; text-decoration: none; }
.account { flex: 1; padding: 0 4px 0 3px; gap: 10px; margin-bottom: 2px; }

.b { display: flex; align-items: center; gap: 4px; height: 22px; flex: none; }
.b:disabled { color: #8a8a8a; }
.b.on { background: #cce4f7; border: 1px solid #0078d7; padding: 0 3px; margin: 0 -4px; height: 24px; }
.caret { width: 0; height: 0; border: 3px solid transparent; border-top-color: currentColor; border-bottom: 0; margin: 0 1px 0 3px; }
.caret.near { margin: 0 0 0 -2px; }
.sep { width: 1px; height: 14px; background: #b8b8b8; margin: 0 -1px; flex: none; }
.sep.tall { height: 26px; }
.grip { width: 2px; height: 16px; flex: none; background: repeating-linear-gradient(#b0b0b0 0 2px, transparent 2px 4px); margin-left: 5px; margin-right: -3px; }
.more { margin-left: auto; font-weight: 700; font-size: 14px; align-self: flex-start; }
.sigma { font-size: 14px; width: 13px; text-align: center; }

.mainbar { display: grid; grid-template-columns: 152px 548px 1fr; gap: 2px; height: 31px; flex: none; padding: 1px 0 2px; }
.mainbar .strip { padding: 0 4px 0 2px; }
.mainbar .quick { padding-left: 5px; }

.work { flex: 1; min-height: 0; display: grid; grid-template-columns: 229px minmax(0, 1fr); gap: 5px; }
.side { display: flex; flex-direction: column; min-height: 0; }
.side h2 { margin: 0; height: 16px; background: #0054e3; color: #fff; font-size: 12px; line-height: 15px; font-weight: 400; display: flex; justify-content: space-between; flex: none; }
.side h2 span { display: flex; gap: 3px; }
.page { height: 22px; border: 1px solid #a0a0a0; background: #f0f0f0; flex: none; margin-right: 1px; padding-top: 2px; }
.expand { height: 28px; display: flex; align-items: center; gap: 7px; padding-left: 7px; background: linear-gradient(#fdfdfd, #f0f0f0); flex: none; }
.treebox { flex: 1; min-height: 0; margin: 0 1px 2px 2px; border: 1px solid #828790; background: #fff; display: flex; overflow: hidden; padding: 1px 2px 1px 0; }
.tree { list-style: none; margin: 0; padding: 0; flex: 1; overflow: hidden; }
.tree li {
  height: 16px; display: flex; align-items: center; padding-left: 42px; white-space: nowrap;
  background:
    repeating-linear-gradient(#888 0 1px, transparent 1px 2px) 12px 0 / 1px 100% no-repeat,
    repeating-linear-gradient(#888 0 1px, transparent 1px 2px) 31px 0 / 1px 100% no-repeat,
    repeating-linear-gradient(90deg, #888 0 1px, transparent 1px 2px) 31px 8px / 10px 1px no-repeat;
}
.tree li.end { background-size: 1px 100%, 1px 8px, 10px 1px; }
.tree li > .i:first-child { margin-right: 4px; }
.tree li.g { padding-left: 8px; background: none; }
.tree li.g::before { content: ""; width: 6px; height: 6px; border: solid #999; border-width: 2px 2px 0 0; transform: rotate(45deg); margin-right: 9px; flex: none; }
.tree li.open::before { border-color: #444; transform: rotate(135deg); }
.sel { background: #d9d9d9; margin-left: -4px; padding: 0 5px 0 4px; line-height: 16px; }
.new { background: #fd0; }
.vscroll { width: 15px; display: flex; flex-direction: column; background: #f0f0f0; }
.vscroll .track { flex: 1; padding-top: 162px; display: flex; }
.vscroll .thumb { width: 100%; height: 88%; background: #cdcdcd; }

.content { display: flex; flex-direction: column; min-width: 0; min-height: 0; }
.row { display: flex; flex: none; }
.row .strip { height: 26px; padding-right: 4px; }
.r1 { height: 27px; }
.r2 { height: 28px; }
.r3 { height: 29px; gap: 3px; }
.r4 { height: 32px; padding-top: 2px; gap: 2px; }
.aux { margin: 0 69px 0 auto; }
.grow { flex: 1; }
.row .stub { width: 33px; }
.r3 .strip { height: 27px; }
.combo { position: relative; width: 69px; height: 22px; background: #fff; margin-right: -4px; flex: none; }
.combo.short { width: 57px; }
.grip + .combo { margin-left: -2px; }
.combo.boxed { width: 55px; height: 24px; border: 1px solid #8a8a8a; background: #f6f6f6; margin: 0 -2px; }
.combo select { appearance: none; border: 0; background: none; font: inherit; color: #000; width: 100%; height: 100%; padding: 0 12px 0 2px; }
.combo::after { content: ""; position: absolute; right: 3px; top: 10px; border: 3px solid transparent; border-top-color: #000; border-bottom: 0; }

.view { flex: 1; min-height: 0; position: relative; background: #000; overflow: hidden; }
.scene { width: 100%; height: 100%; }
.cad { font: 18px "Liberation Mono", monospace; }
.floatbox { position: absolute; left: 10px; top: 3px; width: 167px; height: 177px; background: #fff; border: 1px solid #555; display: flex; flex-direction: column; }
.floatbox h3 { margin: 0; padding: 6px 7px 8px; font-size: 12px; font-weight: 400; color: #999; }
.opts { flex: 1; border: 1px solid #828790; border-width: 1px 2px 2px 1px; padding: 2px 3px; }
.opts label { display: flex; align-items: center; gap: 4px; height: 12px; line-height: 12px; }
input[type=checkbox] { appearance: none; margin: 0; width: 11px; height: 11px; border: 1px solid #999; background: #fff; flex: none; position: relative; }
input[type=checkbox]:checked::after { content: ""; position: absolute; left: 3px; top: 0; width: 4px; height: 7px; border: solid #333; border-width: 0 1px 1px 0; transform: rotate(40deg); }
.num { display: flex; align-items: center; gap: 2px; color: #888; }
.spin { position: relative; width: 58px; height: 23px; border: 1px solid #8a8a8a; display: flex; }
.spin.wide { width: 68px; }
.spin input { width: 100%; min-width: 0; border: 0; background: none; font: inherit; color: #888; text-align: right; padding: 0 18px 0 0; }
.spin::before, .spin::after { content: ""; position: absolute; right: 4px; border: 3px solid transparent; }
.spin::before { top: 4px; border-bottom-color: #666; border-top: 0; }
.spin::after { bottom: 3px; border-top-color: #666; border-bottom: 0; }
.num + .num { margin-left: -3px; }
.check { display: flex; align-items: center; gap: 8px; }
.num + .sep + .check { margin-left: -3px; }

.dock { height: 192px; flex: none; display: flex; gap: 2px; }
.gutter { width: 11px; padding-top: 2px; background: radial-gradient(circle, #b4b4b4 1px, transparent 1px) 1px 16px / 5px 6px; }
.gutter .i { background: #f0f0f0; }
.sheet { flex: 1; min-width: 0; display: flex; flex-direction: column; }
.rec { height: 25px; padding-left: 2px; margin-top: 2px; }
.rec span { margin-left: 2px; }
.gridbox { flex: 1; min-height: 0; border: 1px solid #a8a8a8; border-width: 1px 1px 2px 0; background: #fff; overflow: hidden; display: flex; flex-direction: column; justify-content: space-between; }
table { border-collapse: collapse; table-layout: fixed; width: 1133px; }
th, td { border: solid #c0c0c0; border-width: 0 1px 1px 0; padding: 0 2px; text-align: left; font-weight: 400; overflow: hidden; white-space: nowrap; line-height: 13px; }
th { text-align: center; background: linear-gradient(#fff, #f0f0f0); }
thead th { height: 20px; padding: 0; }
.cur { background: linear-gradient(#ffd890, #f0b958); color: #5c0048; }
tbody tr { height: 19px; }
tbody td { font-family: "Liberation Sans", "Noto Sans CJK SC", sans-serif; }
.hot { height: 29px; }
.hot td { background: #ccffd9; }
.hot th { background: #ffd38c; color: #5c0048; }
.hot .cell { background: #aeeada; }
td:nth-child(3) { border-left: 1px solid #000; }
.mid .grade { width: 12px; height: 12px; margin: 0 auto; }
.fig span { display: block; margin: 0 22px; border-bottom: 2px solid #000; color: #f00; text-align: center; font-size: 11px; line-height: 11px; }
.w73 { width: 73px; } .w56 { width: 56px; } .w36 { width: 36px; } .w33 { width: 33px; }
.w201 { width: 201px; } .w166 { width: 166px; } .w156 { width: 156px; } .w61 { width: 61px; } .w38 { width: 38px; }
.w39 { width: 39px; } .w49 { width: 49px; } .w70 { width: 70px; }
.hscroll { display: flex; background: #f0f0f0; height: 16px; margin-bottom: 1px; }
.hscroll .track { flex: 1; padding-left: 1px; }
.hscroll .thumb { width: 66%; height: 15px; background: #cdcdcd; }

.status { height: 22px; flex: none; display: flex; gap: 2px; padding: 1px 0 0; position: relative; }
.status > span { border: 1px solid #d0d0d0; background: #f7f7f7; padding: 1px 1px; white-space: nowrap; }
.s1 { width: 148px; } .s2 { width: 78px; } .s3 { width: 98px; } .s4 { width: 48px; } .s5 { flex: 1; }
.ime { position: absolute; right: 0; bottom: 0; height: 25px; display: flex; align-items: center; gap: 6px; padding: 0 4px 0 0; background: #f8fbff; border: 1px solid #b8d8ee; border-left: 0; color: #1c74d0; font-size: 14px; }
.ime .logo { width: 28px; height: 28px; margin-left: -8px; }

.taskbar { height: 40px; flex: none; display: flex; background: #02090c; color: #fff; }
.start { width: 48px; padding-left: 16px; }
.search { width: 344px; background: #333; display: flex; align-items: center; padding: 0 13px 0 9px; gap: 6px; }
.ring { width: 21px; height: 21px; border: 3px solid #fff; border-radius: 50%; }
.search input { flex: 1; min-width: 0; background: none; border: 0; padding: 0; color: #fff; font: 14px "Noto Sans CJK SC", sans-serif; }
.search input::placeholder { color: #999; }
.apps { display: flex; flex: 1; padding-left: 2px; gap: 1px; align-items: stretch; }
.apps button { width: 48px; display: flex; align-items: center; justify-content: center; }
.a { width: 24px; height: 24px; }
.a.w { width: 30px; }
.bars { width: 4px; height: 16px; border: solid #555; border-width: 0 1px; align-self: center; margin: 0 10px; }
.run { box-shadow: inset 0 -3px #76b9ed; }
.apps .act { background: #3a4245; }
.tray { display: flex; align-items: center; gap: 8px; }
.tray > b { font-weight: 500; }
.two { text-align: center; line-height: 18px; }
.cpu { margin-right: 10px; }
.sg { margin-left: 6px; }
.clock { margin: 0 12px 0 12px; }
.bell { position: relative; width: 46px; padding-left: 6px; }
.n { width: 20px; height: 20px; }
.bell b { position: absolute; left: 9px; top: 5px; width: 20px; height: 20px; border-radius: 50%; background: #333; border: 1px solid #888; font-size: 11px; line-height: 18px; text-align: center; }
```
